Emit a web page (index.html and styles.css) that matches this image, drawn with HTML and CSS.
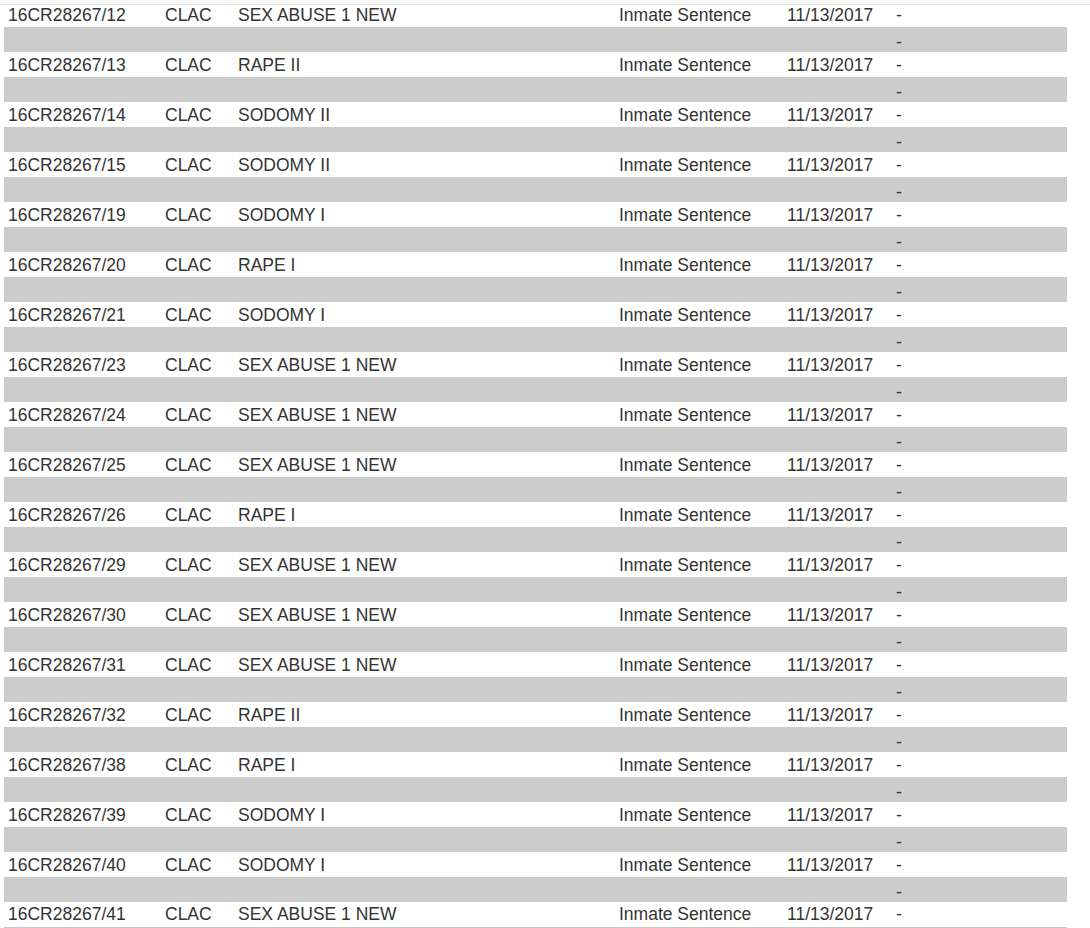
FILE: index.html
```html
<!DOCTYPE html>
<html>
<head>
<meta charset="utf-8">
<link rel="stylesheet" href="styles.css">
</head>
<body>
<div class="topbar"></div>
<table class="charges">
<colgroup>
<col class="c1"><col class="c2"><col class="c3"><col class="c4"><col class="c5"><col class="c6">
</colgroup>
<tbody>
<tr class="main"><td>16CR28267/12</td><td>CLAC</td><td>SEX ABUSE 1 NEW</td><td>Inmate Sentence</td><td>11/13/2017</td><td>-</td></tr>
<tr class="sub"><td colspan="5"></td><td>-</td></tr>
<tr class="main"><td>16CR28267/13</td><td>CLAC</td><td>RAPE II</td><td>Inmate Sentence</td><td>11/13/2017</td><td>-</td></tr>
<tr class="sub"><td colspan="5"></td><td>-</td></tr>
<tr class="main"><td>16CR28267/14</td><td>CLAC</td><td>SODOMY II</td><td>Inmate Sentence</td><td>11/13/2017</td><td>-</td></tr>
<tr class="sub"><td colspan="5"></td><td>-</td></tr>
<tr class="main"><td>16CR28267/15</td><td>CLAC</td><td>SODOMY II</td><td>Inmate Sentence</td><td>11/13/2017</td><td>-</td></tr>
<tr class="sub"><td colspan="5"></td><td>-</td></tr>
<tr class="main"><td>16CR28267/19</td><td>CLAC</td><td>SODOMY I</td><td>Inmate Sentence</td><td>11/13/2017</td><td>-</td></tr>
<tr class="sub"><td colspan="5"></td><td>-</td></tr>
<tr class="main"><td>16CR28267/20</td><td>CLAC</td><td>RAPE I</td><td>Inmate Sentence</td><td>11/13/2017</td><td>-</td></tr>
<tr class="sub"><td colspan="5"></td><td>-</td></tr>
<tr class="main"><td>16CR28267/21</td><td>CLAC</td><td>SODOMY I</td><td>Inmate Sentence</td><td>11/13/2017</td><td>-</td></tr>
<tr class="sub"><td colspan="5"></td><td>-</td></tr>
<tr class="main"><td>16CR28267/23</td><td>CLAC</td><td>SEX ABUSE 1 NEW</td><td>Inmate Sentence</td><td>11/13/2017</td><td>-</td></tr>
<tr class="sub"><td colspan="5"></td><td>-</td></tr>
<tr class="main"><td>16CR28267/24</td><td>CLAC</td><td>SEX ABUSE 1 NEW</td><td>Inmate Sentence</td><td>11/13/2017</td><td>-</td></tr>
<tr class="sub"><td colspan="5"></td><td>-</td></tr>
<tr class="main"><td>16CR28267/25</td><td>CLAC</td><td>SEX ABUSE 1 NEW</td><td>Inmate Sentence</td><td>11/13/2017</td><td>-</td></tr>
<tr class="sub"><td colspan="5"></td><td>-</td></tr>
<tr class="main"><td>16CR28267/26</td><td>CLAC</td><td>RAPE I</td><td>Inmate Sentence</td><td>11/13/2017</td><td>-</td></tr>
<tr class="sub"><td colspan="5"></td><td>-</td></tr>
<tr class="main"><td>16CR28267/29</td><td>CLAC</td><td>SEX ABUSE 1 NEW</td><td>Inmate Sentence</td><td>11/13/2017</td><td>-</td></tr>
<tr class="sub"><td colspan="5"></td><td>-</td></tr>
<tr class="main"><td>16CR28267/30</td><td>CLAC</td><td>SEX ABUSE 1 NEW</td><td>Inmate Sentence</td><td>11/13/2017</td><td>-</td></tr>
<tr class="sub"><td colspan="5"></td><td>-</td></tr>
<tr class="main"><td>16CR28267/31</td><td>CLAC</td><td>SEX ABUSE 1 NEW</td><td>Inmate Sentence</td><td>11/13/2017</td><td>-</td></tr>
<tr class="sub"><td colspan="5"></td><td>-</td></tr>
<tr class="main"><td>16CR28267/32</td><td>CLAC</td><td>RAPE II</td><td>Inmate Sentence</td><td>11/13/2017</td><td>-</td></tr>
<tr class="sub"><td colspan="5"></td><td>-</td></tr>
<tr class="main"><td>16CR28267/38</td><td>CLAC</td><td>RAPE I</td><td>Inmate Sentence</td><td>11/13/2017</td><td>-</td></tr>
<tr class="sub"><td colspan="5"></td><td>-</td></tr>
<tr class="main"><td>16CR28267/39</td><td>CLAC</td><td>SODOMY I</td><td>Inmate Sentence</td><td>11/13/2017</td><td>-</td></tr>
<tr class="sub"><td colspan="5"></td><td>-</td></tr>
<tr class="main"><td>16CR28267/40</td><td>CLAC</td><td>SODOMY I</td><td>Inmate Sentence</td><td>11/13/2017</td><td>-</td></tr>
<tr class="sub"><td colspan="5"></td><td>-</td></tr>
<tr class="main last"><td>16CR28267/41</td><td>CLAC</td><td>SEX ABUSE 1 NEW</td><td>Inmate Sentence</td><td>11/13/2017</td><td>-</td></tr>
</tbody>
</table>
</body>
</html>
```

FILE: styles.css
```css
html, body {
  margin: 0;
  padding: 0;
  background: #ffffff;
}

body {
  font-family: "Liberation Sans", Arial, sans-serif;
  font-size: 17.5px;
  color: #333333;
  padding-top: 2px;
}

.topbar {
  position: fixed;
  top: 0;
  left: 0;
  right: 0;
  height: 4px;
  background: #f7f7f7;
  border-bottom: 1px solid #e4e4e4;
  z-index: 2;
}

.charges {
  margin-left: 4px;
  width: 1063px;
  border-collapse: collapse;
  table-layout: fixed;
  border-bottom: 1px solid #c8c8c8;
}

.c1 { width: 157px; }
.c2 { width: 73px; }
.c3 { width: 381px; }
.c4 { width: 168px; }
.c5 { width: 109px; }
.c6 { width: 175px; }

.charges td {
  height: 25px;
  padding: 0 0 0 4px;
  vertical-align: middle;
  white-space: nowrap;
  box-sizing: border-box;
  line-height: 20px;
}

.sub td {
  background: #cccccc;
  padding-top: 4px;
}
```
